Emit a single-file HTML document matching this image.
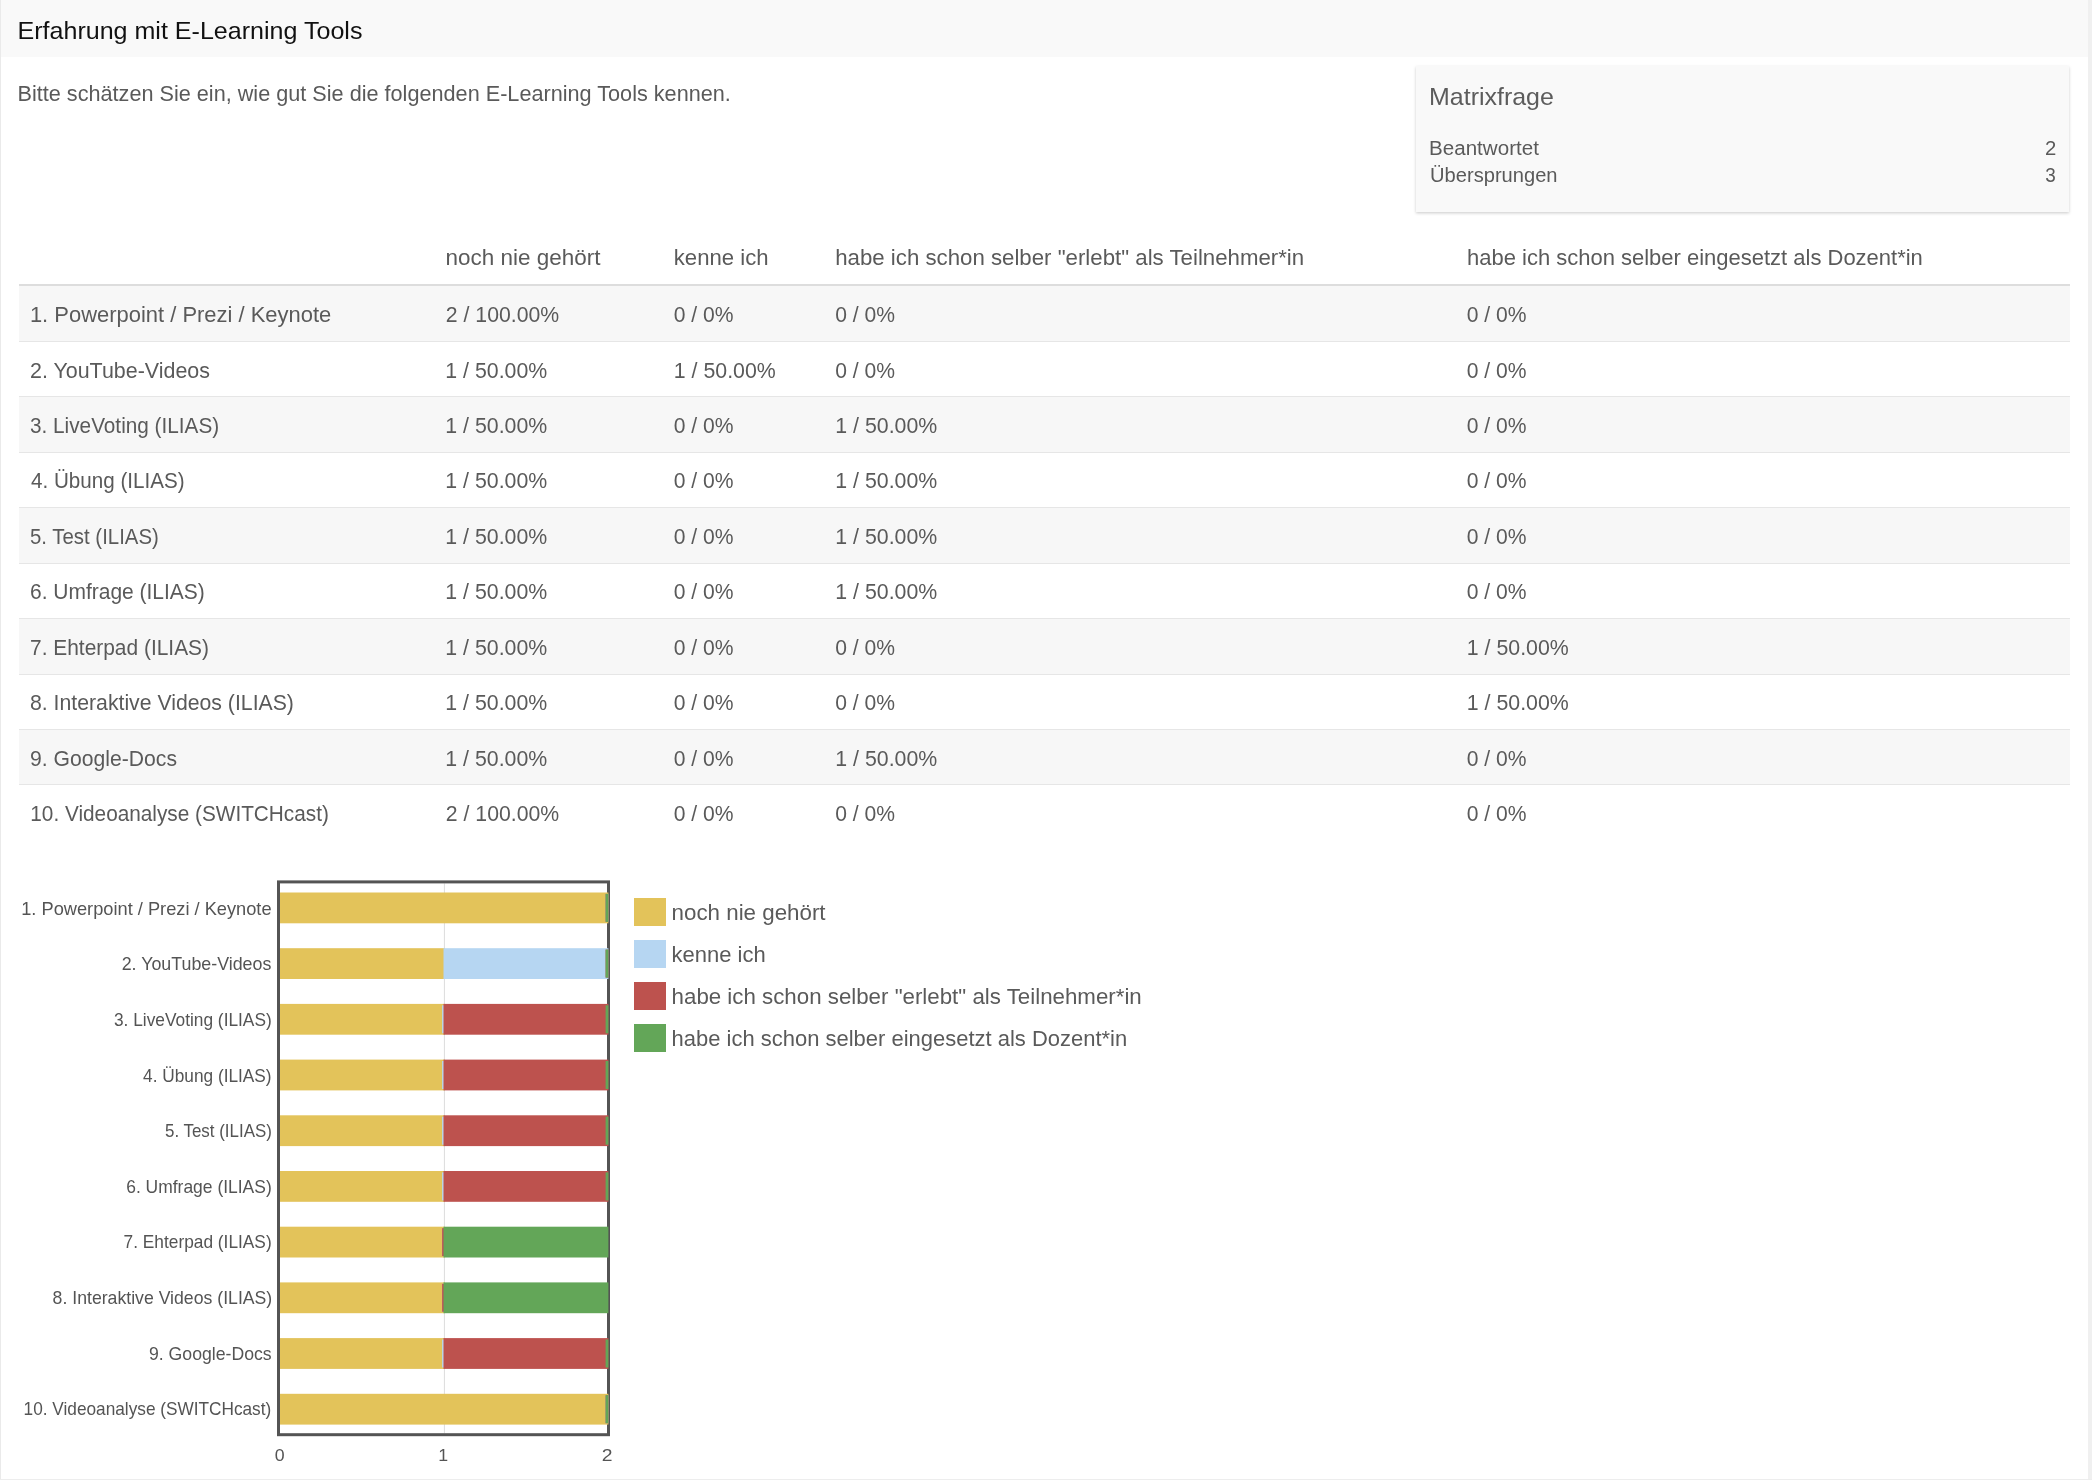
<!DOCTYPE html>
<html><head><meta charset="utf-8"><title>Erfahrung mit E-Learning Tools</title>
<style>html,body{margin:0;padding:0;background:#fff;width:2092px;height:1480px;overflow:hidden;font-family:"Liberation Sans", sans-serif;} svg{display:block}</style>
</head><body><svg style="will-change:transform" width="2092" height="1480" viewBox="0 0 2092 1480" font-family='"Liberation Sans", sans-serif'><rect x="0" y="0" width="2092" height="1480" fill="#ffffff" /><rect x="0" y="0" width="1" height="1480" fill="#eaeaea" /><rect x="2088" y="0" width="4" height="1480" fill="#f0f0f0" /><rect x="0" y="1479" width="2092" height="1" fill="#ededed" /><rect x="1" y="0" width="2087" height="57" fill="#f9f9f9" /><defs><filter id="sh" x="-5%" y="-10%" width="110%" height="130%"><feDropShadow dx="0" dy="1.2" stdDeviation="1.4" flood-color="#000" flood-opacity="0.2"/></filter></defs><rect x="1416" y="66" width="653" height="146" fill="#f9f9f9" filter="url(#sh)"/><rect x="19" y="284" width="2051" height="2" fill="#dddddd" /><rect x="19" y="286.0" width="2051" height="55.42" fill="#f7f7f7" /><rect x="19" y="396.84" width="2051" height="55.42" fill="#f7f7f7" /><rect x="19" y="507.68" width="2051" height="55.42" fill="#f7f7f7" /><rect x="19" y="618.52" width="2051" height="55.42" fill="#f7f7f7" /><rect x="19" y="729.36" width="2051" height="55.42" fill="#f7f7f7" /><rect x="19" y="341" width="2051" height="1" fill="#e6e6e6" /><rect x="19" y="396" width="2051" height="1" fill="#e6e6e6" /><rect x="19" y="452" width="2051" height="1" fill="#e6e6e6" /><rect x="19" y="507" width="2051" height="1" fill="#e6e6e6" /><rect x="19" y="563" width="2051" height="1" fill="#e6e6e6" /><rect x="19" y="618" width="2051" height="1" fill="#e6e6e6" /><rect x="19" y="674" width="2051" height="1" fill="#e6e6e6" /><rect x="19" y="729" width="2051" height="1" fill="#e6e6e6" /><rect x="19" y="784" width="2051" height="1" fill="#e6e6e6" /><rect x="443.9" y="883.4" width="1" height="549.8000000000001" fill="#dcdcdc" /><rect x="278.5" y="881.9" width="330" height="552.8000000000001" fill="none" stroke="#545454" stroke-width="3"/><rect x="280" y="892.5" width="328.4" height="30.8" fill="#e3c35a" /><rect x="605.6" y="893.9" width="2.8" height="28.0" fill="#b6d6f2" /><rect x="605.6" y="893.9" width="2.8" height="28.0" fill="#bd524e" /><rect x="605.6" y="893.9" width="2.8" height="28.0" fill="#63a658" /><rect x="280" y="948.2" width="164.9" height="30.8" fill="#e3c35a" /><rect x="443.5" y="948.2" width="164.9" height="30.8" fill="#b6d6f2" /><rect x="605.6" y="949.6" width="2.8" height="28.0" fill="#bd524e" /><rect x="605.6" y="949.6" width="2.8" height="28.0" fill="#63a658" /><rect x="280" y="1003.9" width="164.9" height="30.8" fill="#e3c35a" /><rect x="442.1" y="1005.3" width="2.8" height="28.0" fill="#b6d6f2" /><rect x="443.5" y="1003.9" width="164.9" height="30.8" fill="#bd524e" /><rect x="605.6" y="1005.3" width="2.8" height="28.0" fill="#63a658" /><rect x="280" y="1059.6" width="164.9" height="30.8" fill="#e3c35a" /><rect x="442.1" y="1061.0" width="2.8" height="28.0" fill="#b6d6f2" /><rect x="443.5" y="1059.6" width="164.9" height="30.8" fill="#bd524e" /><rect x="605.6" y="1061.0" width="2.8" height="28.0" fill="#63a658" /><rect x="280" y="1115.3" width="164.9" height="30.8" fill="#e3c35a" /><rect x="442.1" y="1116.7" width="2.8" height="28.0" fill="#b6d6f2" /><rect x="443.5" y="1115.3" width="164.9" height="30.8" fill="#bd524e" /><rect x="605.6" y="1116.7" width="2.8" height="28.0" fill="#63a658" /><rect x="280" y="1171.0" width="164.9" height="30.8" fill="#e3c35a" /><rect x="442.1" y="1172.4" width="2.8" height="28.0" fill="#b6d6f2" /><rect x="443.5" y="1171.0" width="164.9" height="30.8" fill="#bd524e" /><rect x="605.6" y="1172.4" width="2.8" height="28.0" fill="#63a658" /><rect x="280" y="1226.7" width="164.9" height="30.8" fill="#e3c35a" /><rect x="442.1" y="1228.1" width="2.8" height="28.0" fill="#b6d6f2" /><rect x="442.1" y="1228.1" width="2.8" height="28.0" fill="#bd524e" /><rect x="443.5" y="1226.7" width="164.9" height="30.8" fill="#63a658" /><rect x="280" y="1282.4" width="164.9" height="30.8" fill="#e3c35a" /><rect x="442.1" y="1283.8" width="2.8" height="28.0" fill="#b6d6f2" /><rect x="442.1" y="1283.8" width="2.8" height="28.0" fill="#bd524e" /><rect x="443.5" y="1282.4" width="164.9" height="30.8" fill="#63a658" /><rect x="280" y="1338.1" width="164.9" height="30.8" fill="#e3c35a" /><rect x="442.1" y="1339.5" width="2.8" height="28.0" fill="#b6d6f2" /><rect x="443.5" y="1338.1" width="164.9" height="30.8" fill="#bd524e" /><rect x="605.6" y="1339.5" width="2.8" height="28.0" fill="#63a658" /><rect x="280" y="1393.8" width="328.4" height="30.8" fill="#e3c35a" /><rect x="605.6" y="1395.2" width="2.8" height="28.0" fill="#b6d6f2" /><rect x="605.6" y="1395.2" width="2.8" height="28.0" fill="#bd524e" /><rect x="605.6" y="1395.2" width="2.8" height="28.0" fill="#63a658" /><rect x="634" y="898" width="32" height="28" fill="#e3c35a" /><rect x="634" y="940" width="32" height="28" fill="#b6d6f2" /><rect x="634" y="982" width="32" height="28" fill="#bd524e" /><rect x="634" y="1024" width="32" height="28" fill="#63a658" /><text x="17.5" y="38.7" font-size="24.4" fill="#111111" textLength="344.91" lengthAdjust="spacingAndGlyphs">Erfahrung mit E-Learning Tools</text><text x="17.5" y="100.6" font-size="21.8" fill="#5a5a5a" textLength="713.35" lengthAdjust="spacingAndGlyphs">Bitte schätzen Sie ein, wie gut Sie die folgenden E-Learning Tools kennen.</text><text x="1429.1" y="105" font-size="24.2" fill="#5c5c5c" textLength="124.71" lengthAdjust="spacingAndGlyphs">Matrixfrage</text><text x="1429.1" y="155" font-size="19.6" fill="#5a5a5a" textLength="109.75" lengthAdjust="spacingAndGlyphs">Beantwortet</text><text x="1430.1" y="182" font-size="19.6" fill="#5a5a5a" textLength="127.46" lengthAdjust="spacingAndGlyphs">Übersprungen</text><text x="2045.0" y="155" font-size="19.6" fill="#5a5a5a" textLength="11.3" lengthAdjust="spacingAndGlyphs">2</text><text x="2045.2" y="182" font-size="19.6" fill="#5a5a5a" textLength="10.52" lengthAdjust="spacingAndGlyphs">3</text><text x="445.5" y="265" font-size="22.2" fill="#5a5a5a" textLength="154.93" lengthAdjust="spacingAndGlyphs">noch nie gehört</text><text x="673.8" y="265" font-size="22.2" fill="#5a5a5a" textLength="94.71" lengthAdjust="spacingAndGlyphs">kenne ich</text><text x="835.2" y="265" font-size="22.2" fill="#5a5a5a" textLength="468.99" lengthAdjust="spacingAndGlyphs">habe ich schon selber &quot;erlebt&quot; als Teilnehmer*in</text><text x="1467.0" y="265" font-size="22.2" fill="#5a5a5a" textLength="455.83" lengthAdjust="spacingAndGlyphs">habe ich schon selber eingesetzt als Dozent*in</text><text x="29.9" y="322.2" font-size="22.2" fill="#5a5a5a" textLength="301.33" lengthAdjust="spacingAndGlyphs">1. Powerpoint / Prezi / Keynote</text><text x="445.8" y="322.2" font-size="22.2" fill="#5a5a5a" textLength="113.38" lengthAdjust="spacingAndGlyphs">2 / 100.00%</text><text x="673.7" y="322.2" font-size="22.2" fill="#5a5a5a" textLength="59.81" lengthAdjust="spacingAndGlyphs">0 / 0%</text><text x="835.2" y="322.2" font-size="22.2" fill="#5a5a5a" textLength="59.81" lengthAdjust="spacingAndGlyphs">0 / 0%</text><text x="1466.7" y="322.2" font-size="22.2" fill="#5a5a5a" textLength="59.81" lengthAdjust="spacingAndGlyphs">0 / 0%</text><text x="30.0" y="377.62" font-size="22.2" fill="#5a5a5a" textLength="179.99" lengthAdjust="spacingAndGlyphs">2. YouTube-Videos</text><text x="445.3" y="377.62" font-size="22.2" fill="#5a5a5a" textLength="101.97" lengthAdjust="spacingAndGlyphs">1 / 50.00%</text><text x="673.8" y="377.62" font-size="22.2" fill="#5a5a5a" textLength="101.97" lengthAdjust="spacingAndGlyphs">1 / 50.00%</text><text x="835.2" y="377.62" font-size="22.2" fill="#5a5a5a" textLength="59.81" lengthAdjust="spacingAndGlyphs">0 / 0%</text><text x="1466.7" y="377.62" font-size="22.2" fill="#5a5a5a" textLength="59.81" lengthAdjust="spacingAndGlyphs">0 / 0%</text><text x="30.0" y="433.03999999999996" font-size="22.2" fill="#5a5a5a" textLength="189.17" lengthAdjust="spacingAndGlyphs">3. LiveVoting (ILIAS)</text><text x="445.3" y="433.03999999999996" font-size="22.2" fill="#5a5a5a" textLength="101.97" lengthAdjust="spacingAndGlyphs">1 / 50.00%</text><text x="673.7" y="433.03999999999996" font-size="22.2" fill="#5a5a5a" textLength="59.81" lengthAdjust="spacingAndGlyphs">0 / 0%</text><text x="835.3" y="433.03999999999996" font-size="22.2" fill="#5a5a5a" textLength="101.97" lengthAdjust="spacingAndGlyphs">1 / 50.00%</text><text x="1466.7" y="433.03999999999996" font-size="22.2" fill="#5a5a5a" textLength="59.81" lengthAdjust="spacingAndGlyphs">0 / 0%</text><text x="31.0" y="488.46" font-size="22.2" fill="#5a5a5a" textLength="153.6" lengthAdjust="spacingAndGlyphs">4. Übung (ILIAS)</text><text x="445.3" y="488.46" font-size="22.2" fill="#5a5a5a" textLength="101.97" lengthAdjust="spacingAndGlyphs">1 / 50.00%</text><text x="673.7" y="488.46" font-size="22.2" fill="#5a5a5a" textLength="59.81" lengthAdjust="spacingAndGlyphs">0 / 0%</text><text x="835.3" y="488.46" font-size="22.2" fill="#5a5a5a" textLength="101.97" lengthAdjust="spacingAndGlyphs">1 / 50.00%</text><text x="1466.7" y="488.46" font-size="22.2" fill="#5a5a5a" textLength="59.81" lengthAdjust="spacingAndGlyphs">0 / 0%</text><text x="30.0" y="543.88" font-size="22.2" fill="#5a5a5a" textLength="128.78" lengthAdjust="spacingAndGlyphs">5. Test (ILIAS)</text><text x="445.3" y="543.88" font-size="22.2" fill="#5a5a5a" textLength="101.97" lengthAdjust="spacingAndGlyphs">1 / 50.00%</text><text x="673.7" y="543.88" font-size="22.2" fill="#5a5a5a" textLength="59.81" lengthAdjust="spacingAndGlyphs">0 / 0%</text><text x="835.3" y="543.88" font-size="22.2" fill="#5a5a5a" textLength="101.97" lengthAdjust="spacingAndGlyphs">1 / 50.00%</text><text x="1466.7" y="543.88" font-size="22.2" fill="#5a5a5a" textLength="59.81" lengthAdjust="spacingAndGlyphs">0 / 0%</text><text x="30.0" y="599.3" font-size="22.2" fill="#5a5a5a" textLength="174.81" lengthAdjust="spacingAndGlyphs">6. Umfrage (ILIAS)</text><text x="445.3" y="599.3" font-size="22.2" fill="#5a5a5a" textLength="101.97" lengthAdjust="spacingAndGlyphs">1 / 50.00%</text><text x="673.7" y="599.3" font-size="22.2" fill="#5a5a5a" textLength="59.81" lengthAdjust="spacingAndGlyphs">0 / 0%</text><text x="835.3" y="599.3" font-size="22.2" fill="#5a5a5a" textLength="101.97" lengthAdjust="spacingAndGlyphs">1 / 50.00%</text><text x="1466.7" y="599.3" font-size="22.2" fill="#5a5a5a" textLength="59.81" lengthAdjust="spacingAndGlyphs">0 / 0%</text><text x="30.0" y="654.72" font-size="22.2" fill="#5a5a5a" textLength="179.04" lengthAdjust="spacingAndGlyphs">7. Ehterpad (ILIAS)</text><text x="445.3" y="654.72" font-size="22.2" fill="#5a5a5a" textLength="101.97" lengthAdjust="spacingAndGlyphs">1 / 50.00%</text><text x="673.7" y="654.72" font-size="22.2" fill="#5a5a5a" textLength="59.81" lengthAdjust="spacingAndGlyphs">0 / 0%</text><text x="835.2" y="654.72" font-size="22.2" fill="#5a5a5a" textLength="59.81" lengthAdjust="spacingAndGlyphs">0 / 0%</text><text x="1466.8" y="654.72" font-size="22.2" fill="#5a5a5a" textLength="101.97" lengthAdjust="spacingAndGlyphs">1 / 50.00%</text><text x="30.0" y="710.14" font-size="22.2" fill="#5a5a5a" textLength="263.92" lengthAdjust="spacingAndGlyphs">8. Interaktive Videos (ILIAS)</text><text x="445.3" y="710.14" font-size="22.2" fill="#5a5a5a" textLength="101.97" lengthAdjust="spacingAndGlyphs">1 / 50.00%</text><text x="673.7" y="710.14" font-size="22.2" fill="#5a5a5a" textLength="59.81" lengthAdjust="spacingAndGlyphs">0 / 0%</text><text x="835.2" y="710.14" font-size="22.2" fill="#5a5a5a" textLength="59.81" lengthAdjust="spacingAndGlyphs">0 / 0%</text><text x="1466.8" y="710.14" font-size="22.2" fill="#5a5a5a" textLength="101.97" lengthAdjust="spacingAndGlyphs">1 / 50.00%</text><text x="30.0" y="765.56" font-size="22.2" fill="#5a5a5a" textLength="146.96" lengthAdjust="spacingAndGlyphs">9. Google-Docs</text><text x="445.3" y="765.56" font-size="22.2" fill="#5a5a5a" textLength="101.97" lengthAdjust="spacingAndGlyphs">1 / 50.00%</text><text x="673.7" y="765.56" font-size="22.2" fill="#5a5a5a" textLength="59.81" lengthAdjust="spacingAndGlyphs">0 / 0%</text><text x="835.3" y="765.56" font-size="22.2" fill="#5a5a5a" textLength="101.97" lengthAdjust="spacingAndGlyphs">1 / 50.00%</text><text x="1466.7" y="765.56" font-size="22.2" fill="#5a5a5a" textLength="59.81" lengthAdjust="spacingAndGlyphs">0 / 0%</text><text x="30.3" y="820.98" font-size="22.2" fill="#5a5a5a" textLength="298.57" lengthAdjust="spacingAndGlyphs">10. Videoanalyse (SWITCHcast)</text><text x="445.8" y="820.98" font-size="22.2" fill="#5a5a5a" textLength="113.38" lengthAdjust="spacingAndGlyphs">2 / 100.00%</text><text x="673.7" y="820.98" font-size="22.2" fill="#5a5a5a" textLength="59.81" lengthAdjust="spacingAndGlyphs">0 / 0%</text><text x="835.2" y="820.98" font-size="22.2" fill="#5a5a5a" textLength="59.81" lengthAdjust="spacingAndGlyphs">0 / 0%</text><text x="1466.7" y="820.98" font-size="22.2" fill="#5a5a5a" textLength="59.81" lengthAdjust="spacingAndGlyphs">0 / 0%</text><text x="21.2" y="914.7" font-size="18.5" fill="#545454" textLength="250.39" lengthAdjust="spacingAndGlyphs">1. Powerpoint / Prezi / Keynote</text><text x="121.7" y="970.32" font-size="18.5" fill="#545454" textLength="149.65" lengthAdjust="spacingAndGlyphs">2. YouTube-Videos</text><text x="114.0" y="1025.94" font-size="18.5" fill="#545454" textLength="157.71" lengthAdjust="spacingAndGlyphs">3. LiveVoting (ILIAS)</text><text x="143.1" y="1081.56" font-size="18.5" fill="#545454" textLength="128.53" lengthAdjust="spacingAndGlyphs">4. Übung (ILIAS)</text><text x="165.0" y="1137.18" font-size="18.5" fill="#545454" textLength="106.87" lengthAdjust="spacingAndGlyphs">5. Test (ILIAS)</text><text x="126.2" y="1192.8" font-size="18.5" fill="#545454" textLength="145.52" lengthAdjust="spacingAndGlyphs">6. Umfrage (ILIAS)</text><text x="123.6" y="1248.42" font-size="18.5" fill="#545454" textLength="148.07" lengthAdjust="spacingAndGlyphs">7. Ehterpad (ILIAS)</text><text x="52.6" y="1304.04" font-size="18.5" fill="#545454" textLength="219.65" lengthAdjust="spacingAndGlyphs">8. Interaktive Videos (ILIAS)</text><text x="149.0" y="1359.66" font-size="18.5" fill="#545454" textLength="122.63" lengthAdjust="spacingAndGlyphs">9. Google-Docs</text><text x="23.6" y="1415.28" font-size="18.5" fill="#545454" textLength="247.68" lengthAdjust="spacingAndGlyphs">10. Videoanalyse (SWITCHcast)</text><text x="274.7" y="1461.2" font-size="16" fill="#545454" textLength="9.86" lengthAdjust="spacingAndGlyphs">0</text><text x="438.2" y="1461.2" font-size="16" fill="#545454" textLength="9.86" lengthAdjust="spacingAndGlyphs">1</text><text x="601.7" y="1461.2" font-size="16" fill="#545454" textLength="10.76" lengthAdjust="spacingAndGlyphs">2</text><text x="671.6" y="920" font-size="22.2" fill="#5a5a5a" textLength="153.98" lengthAdjust="spacingAndGlyphs">noch nie gehört</text><text x="671.6" y="961.9" font-size="22.2" fill="#5a5a5a" textLength="94.12" lengthAdjust="spacingAndGlyphs">kenne ich</text><text x="671.6" y="1003.9" font-size="22.2" fill="#5a5a5a" textLength="470.15" lengthAdjust="spacingAndGlyphs">habe ich schon selber &quot;erlebt&quot; als Teilnehmer*in</text><text x="671.6" y="1046" font-size="22.2" fill="#5a5a5a" textLength="455.62" lengthAdjust="spacingAndGlyphs">habe ich schon selber eingesetzt als Dozent*in</text></svg></body></html>
